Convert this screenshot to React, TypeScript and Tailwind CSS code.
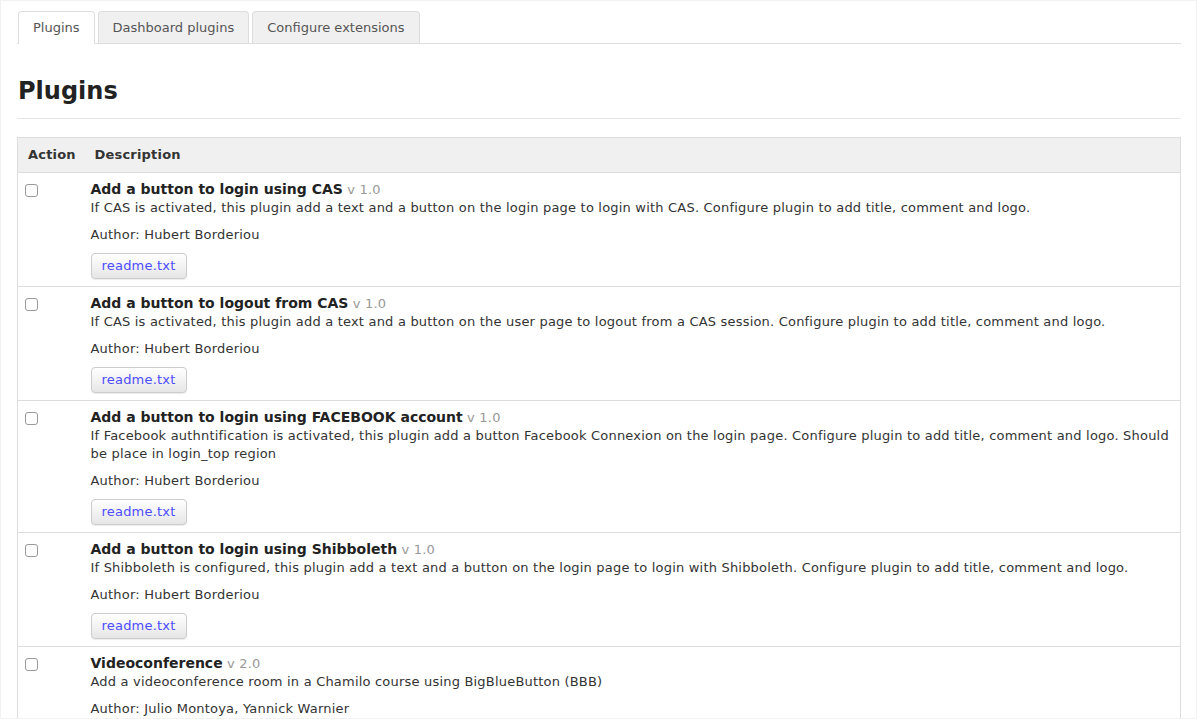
const plugins = [
  {
    title: "Add a button to login using CAS",
    version: "1.0",
    description:
      "If CAS is activated, this plugin add a text and a button on the login page to login with CAS. Configure plugin to add title, comment and logo.",
    author: "Hubert Borderiou",
    readme: true,
  },
  {
    title: "Add a button to logout from CAS",
    version: "1.0",
    description:
      "If CAS is activated, this plugin add a text and a button on the user page to logout from a CAS session. Configure plugin to add title, comment and logo.",
    author: "Hubert Borderiou",
    readme: true,
  },
  {
    title: "Add a button to login using FACEBOOK account",
    version: "1.0",
    description:
      "If Facebook authntification is activated, this plugin add a button Facebook Connexion on the login page. Configure plugin to add title, comment and logo. Should be place in login_top region",
    author: "Hubert Borderiou",
    readme: true,
  },
  {
    title: "Add a button to login using Shibboleth",
    version: "1.0",
    description:
      "If Shibboleth is configured, this plugin add a text and a button on the login page to login with Shibboleth. Configure plugin to add title, comment and logo.",
    author: "Hubert Borderiou",
    readme: true,
  },
  {
    title: "Videoconference",
    version: "2.0",
    description: "Add a videoconference room in a Chamilo course using BigBlueButton (BBB)",
    author: "Julio Montoya, Yannick Warnier",
    readme: true,
  },
];

const tabs = ["Plugins", "Dashboard plugins", "Configure extensions"];

export default function App() {
  return (
    <div className="min-h-screen bg-white font-['DejaVu_Sans',sans-serif] text-[13px] text-[#333] leading-[18px] tracking-[0.2px]">
      <div className="h-[719px] overflow-hidden border border-[#f2f2f2] pl-[16px] pr-[15px]">
        <ul className="mt-[10px] flex gap-[3px] border-b border-[#ddd] pl-px tracking-normal">
          {tabs.map((t, i) => (
            <li
              key={t}
              className={
                i === 0
                  ? "-mb-px h-[33px] rounded-t-[4px] border border-[#ddd] border-b-white bg-white px-[14px] pt-[7px] text-[#555]"
                  : "h-[32px] rounded-t-[4px] border border-b-0 border-[#ddd] bg-[#f0f0f0] px-[14px] pt-[7px] text-[#555]"
              }
            >
              {t}
            </li>
          ))}
        </ul>

        <h1 className="mt-[32px] pl-px text-[24px] font-bold leading-[30px] tracking-normal text-[#222]">Plugins</h1>
        <div className="mt-[12px] border-t border-[#e5e5e5]" />

        <table className="mt-[18px] w-full border-collapse border border-[#ddd]">
          <thead>
            <tr className="h-[35px] bg-[#f0f0f0] text-left">
              <th className="w-[72px] pl-[10px] font-bold">Action</th>
              <th className="pl-[5px] font-bold">Description</th>
            </tr>
          </thead>
          <tbody>
            {plugins.map((p) => (
              <tr key={p.title} className="border-t border-[#ddd] align-top">
                <td className="pl-[7px] pt-[11px]">
                  <input
                    type="checkbox"
                    className="h-[13px] w-[13px] appearance-none rounded-[3px] border border-[#999] bg-white"
                  />
                </td>
                <td className="pb-[7px] pl-px pr-[4px] pt-[7px]">
                  <div>
                    <span className="text-[14px] font-bold tracking-normal text-[#222]">{p.title}</span>{" "}
                    <span className="text-[#999]">v {p.version}</span>
                  </div>
                  <p>{p.description}</p>
                  <p className="mt-[9px]">Author: {p.author}</p>
                  {p.readme && (
                    <button className="mt-[9px] box-border h-[26px] w-[96px] rounded-[4px] border border-[#ccc] bg-gradient-to-b from-white to-[#e6e6e6] text-[#4d4dff] shadow-[0_1px_1px_rgba(0,0,0,0.08)]">
                      readme.txt
                    </button>
                  )}
                </td>
              </tr>
            ))}
          </tbody>
        </table>
      </div>
    </div>
  );
}
